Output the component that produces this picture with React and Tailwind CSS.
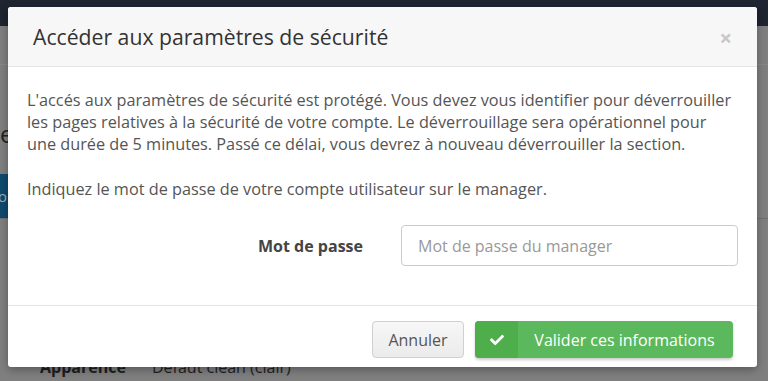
import React from "react";
import { FaCheck } from "react-icons/fa";

export default function App() {
  const font = { fontFamily: '"Open Sans", "Noto Sans", sans-serif' };
  return (
    <div className="relative h-[381px] w-[768px] overflow-hidden bg-[#7f7f7f]" style={font}>
      {/* page behind overlay */}
      <div className="h-[26px] bg-[#1e2430]" />
      <div className="h-[39px] border-b border-[#888888]" />
      <div className="mt-[54px] text-[24px] leading-[30px] text-[#222]">e</div>
      <div className="mt-[25px] flex h-[45px] items-stretch border-b border-[#6f6f6f]">
        <div className="flex w-[8px] items-center overflow-hidden bg-[#0f4a6b] text-[15px] text-[#8fb0c4]">
          <span className="-ml-[2px]">o</span>
        </div>
      </div>
      <div className="mt-[137px] flex text-[16px] leading-[22px] text-[#1e1e1e]">
        <span className="ml-[40px] w-[112px] font-bold">Apparence</span>
        <span>Défaut clean (clair)</span>
      </div>

      {/* modal */}
      <div className="absolute left-[8px] top-[7px] flex h-[360px] w-[749px] flex-col overflow-hidden rounded-[3px] bg-white shadow-[0_3px_9px_rgba(0,0,0,0.3)]">
        <div className="flex h-[60px] items-center justify-between border-b border-[#e5e5e5] bg-[#f7f7f7] pl-[25px] pr-[25px]">
          <h4 className="text-[21.2px] leading-[26px] text-[#333]">Accéder aux paramètres de sécurité</h4>
          <span className="text-[22px] font-bold leading-none text-[#c8c8c8]">×</span>
        </div>
        <div className="flex-1 px-[19px] pt-[22px] text-[16.25px] leading-[22px] text-[#555]">
          <p>
            L'accés aux paramètres de sécurité est protégé. Vous devez vous identifier pour déverrouiller les pages
            relatives à la sécurité de votre compte. Le déverrouillage sera opérationnel pour une durée de 5 minutes.
            Passé ce délai, vous devrez à nouveau déverrouiller la section.
          </p>
          <p className="mt-[23px]">Indiquez le mot de passe de votre compte utilisateur sur le manager.</p>
          <div className="mt-[25px] flex items-center">
            <label className="w-[336px] text-right text-[16px] font-bold text-[#444]">Mot de passe</label>
            <input
              type="password"
              placeholder="Mot de passe du manager"
              className="ml-[38px] h-[41px] w-[337px] rounded-[4px] border border-[#cccccc] px-[16px] text-[16px] text-[#555] placeholder:text-[#999] outline-none"
              style={font}
            />
          </div>
        </div>
        <div className="flex h-[62px] items-start justify-end gap-[11px] border-t border-[#e5e5e5] pr-[24px] pt-[15px]">
          <button
            className="h-[37px] w-[92px] rounded-[4px] border border-[#d0d0d0] bg-gradient-to-b from-[#f7f7f7] to-[#ebebeb] text-[16px] text-[#555]"
            style={font}
          >
            Annuler
          </button>
          <button
            className="flex h-[37px] w-[258px] overflow-hidden rounded-[4px] bg-[#5cb85c] text-[16px] text-white shadow-[0_2px_3px_rgba(0,0,0,0.2)]"
            style={font}
          >
            <span className="flex h-full w-[43px] items-center justify-center bg-[#4fae4c]">
              <FaCheck className="h-[14px] w-[14px]" />
            </span>
            <span className="flex h-full flex-1 items-center justify-center pr-[2px] leading-[22px]">
              Valider ces informations
            </span>
          </button>
        </div>
      </div>
    </div>
  );
}
